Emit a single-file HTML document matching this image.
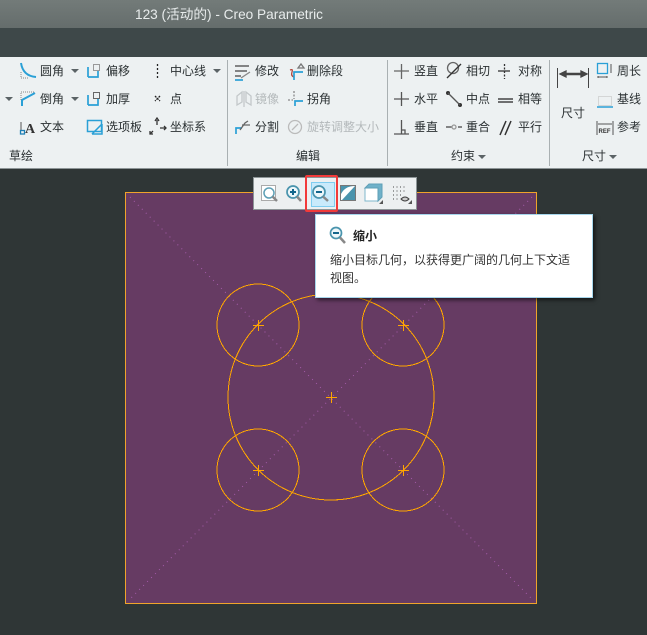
<!DOCTYPE html>
<html><head><meta charset="utf-8">
<style>
html,body{margin:0;padding:0}
body{width:647px;height:635px;overflow:hidden;position:relative;background:#2f3636;font-family:"Liberation Sans","Noto Sans CJK SC",sans-serif;}
.t{position:absolute;font-size:12px;line-height:16px;color:#2b3133;white-space:nowrap;font-family:"Noto Sans CJK SC","Liberation Sans",sans-serif}
.g{color:#b4b9bb}
.s{position:absolute;width:1px;top:60px;height:106px;background:#a9b0b2}
.a{position:absolute;width:0;height:0;border-left:4px solid transparent;border-right:4px solid transparent;border-top:4px solid #5b6366}
.c{position:absolute;background:#ffa500}
svg{position:absolute;overflow:visible}
</style></head><body>
<div style="position:absolute;left:0;top:0;width:647px;height:28px;background:linear-gradient(#737b79,#656d6c)"></div>
<div style="position:absolute;left:135px;top:6px;font-size:13.65px;line-height:17px;color:#e8ecec;white-space:nowrap">123 (活动的) - Creo Parametric</div>
<div style="position:absolute;left:0;top:28px;width:647px;height:29px;background:#3e4849"></div>
<div style="position:absolute;left:0;top:57px;width:647px;height:111px;background:#edf1f2"></div>
<div style="position:absolute;left:0;top:168px;width:647px;height:1px;background:#8d9597"></div>
<div class="s" style="left:227px"></div><div class="s" style="left:387px"></div><div class="s" style="left:549px"></div>

<div class="t" style="left:40px;top:63px">圆角</div><div class="t" style="left:106px;top:63px">偏移</div><div class="t" style="left:170px;top:63px">中心线</div>
<div class="t" style="left:40px;top:91px">倒角</div><div class="t" style="left:106px;top:91px">加厚</div><div class="t" style="left:170px;top:91px">点</div>
<div class="t" style="left:40px;top:119px">文本</div><div class="t" style="left:106px;top:119px">选项板</div><div class="t" style="left:170px;top:119px">坐标系</div>
<div class="t" style="left:9px;top:148px">草绘</div>
<div class="t" style="left:255px;top:63px">修改</div><div class="t" style="left:307px;top:63px">删除段</div>
<div class="t g" style="left:255px;top:91px">镜像</div><div class="t" style="left:307px;top:91px">拐角</div>
<div class="t" style="left:255px;top:119px">分割</div><div class="t g" style="left:307px;top:119px">旋转调整大小</div>
<div class="t" style="left:296px;top:148px">编辑</div>
<div class="t" style="left:414px;top:63px">竖直</div><div class="t" style="left:414px;top:91px">水平</div><div class="t" style="left:414px;top:119px">垂直</div>
<div class="t" style="left:466px;top:63px">相切</div><div class="t" style="left:466px;top:91px">中点</div><div class="t" style="left:466px;top:119px">重合</div>
<div class="t" style="left:518px;top:63px">对称</div><div class="t" style="left:518px;top:91px">相等</div><div class="t" style="left:518px;top:119px">平行</div>
<div class="t" style="left:451px;top:148px">约束</div>
<div class="t" style="left:561px;top:105px">尺寸</div>
<div class="t" style="left:617px;top:63px">周长</div><div class="t" style="left:617px;top:91px">基线</div><div class="t" style="left:617px;top:119px">参考</div>
<div class="t" style="left:582px;top:148px">尺寸</div>

<div class="a" style="left:71px;top:69px"></div><div class="a" style="left:213px;top:69px"></div>
<div class="a" style="left:5px;top:97px"></div><div class="a" style="left:71px;top:97px"></div>
<div class="a" style="left:478px;top:155px"></div><div class="a" style="left:609px;top:155px"></div>

<svg width="647" height="170" style="left:0;top:0" fill="none" stroke-width="1.300">
<path d="M21 63Q23 76 36 77" stroke="#2aa0d6" stroke-width="2"/><path d="M21 72V78H28" stroke="#888" stroke-width="1" stroke-dasharray="1 1"/>
<path d="M22 106V100L35 93" stroke="#2aa0d6" stroke-width="2"/><path d="M21 100V92H35" stroke="#888" stroke-width="1" stroke-dasharray="1 1"/>
<text x="25" y="133" font-family="Liberation Serif" font-weight="bold" font-size="14" fill="#333">A</text><path d="M21 122V130" stroke="#555" stroke-width="1"/><rect x="20.500" y="130.500" width="4" height="3.500" stroke="#1d7fb5"/>
<path d="M88 77V67M88 77H98V71" stroke="#2aa0d6" stroke-width="1.700"/><rect x="93.500" y="64.500" width="6" height="6" stroke="#999" stroke-width="1"/>
<path d="M88 105V95M88 105H98V99" stroke="#2aa0d6" stroke-width="1.700"/><rect x="93.500" y="92.500" width="6" height="6" stroke="#666" stroke-width="1"/>
<rect x="87.500" y="120.500" width="14" height="11" stroke="#2aa0d6" stroke-width="1.500"/><path d="M92 134H102V124M92 134L102 124" stroke="#2aa0d6" stroke-width="1.500"/>
<path d="M157.500 64V79" stroke="#222" stroke-dasharray="2 2"/>
<path d="M155 96L160 101M160 96L155 101" stroke="#222" stroke-dasharray="2 1"/>
<path d="M157 120V125M153 131L150 134M160 128H165" stroke="#333"/><path d="M155 121L157 118L159 121M150 131V134H153M164 126L166 128L164 130" stroke="#333"/>
<path d="M235 66H249M235 71H247M235 76H241" stroke="#444"/><path d="M235 80H243" stroke="#2aa0d6" stroke-width="1.700"/><path d="M241 78L250 72" stroke="#888"/>
<path d="M294 77C288 75 296 68 290 70" stroke="#b0463c"/><path d="M294 80V72H303" stroke="#2aa0d6" stroke-width="1.700"/><path d="M298 68L301 64L304 68Z" stroke="#777"/>
<path d="M242 92L237 96V105L242 102ZM246 92L251 96V105L246 102Z" stroke="#c3c8ca"/><path d="M244 91V107" stroke="#c3c8ca"/>
<path d="M288 100H293M294 91V99" stroke="#888" stroke-dasharray="2 1.500"/><path d="M295 106V101H303" stroke="#2aa0d6" stroke-width="1.700"/>
<path d="M236 134V128H242" stroke="#2aa0d6" stroke-width="1.700"/><path d="M242 125H250M240 130L245 123L248 121" stroke="#666"/>
<circle cx="295" cy="127" r="6.500" stroke="#bbb"/><path d="M292 130L298 124" stroke="#bbb"/>
<path d="M394 71H409M401.500 64V79" stroke="#666"/><path d="M394 99H409M401.500 92V106" stroke="#555"/>
<path d="M394 134H409M401.500 120V134M401.500 130H405V134" stroke="#555"/>
<circle cx="453" cy="68" r="5.500" stroke="#666"/><path d="M447 78L461 64" stroke="#333"/>
<circle cx="448" cy="93" r="2" fill="#333"/><circle cx="460" cy="105" r="2" fill="#333"/><path d="M448 93L460 105" stroke="#555"/>
<path d="M446 127H452M458 127H462" stroke="#444"/><circle cx="454" cy="127" r="2" stroke="#999"/>
<path d="M504.500 64V79" stroke="#333" stroke-dasharray="2 1.500"/><path d="M498 71H510" stroke="#333"/>
<path d="M498 99H513M498 102H513" stroke="#444" stroke-width="1.400"/>
<path d="M500 135L506 121M505 135L511 121" stroke="#333" stroke-width="1.500"/>
<path d="M557.500 68V88M588.500 68V88" stroke="#444" stroke-width="1"/><path d="M562 74H584" stroke="#444" stroke-width="2.500"/><path d="M560 74L566 71V77ZM587 74L581 71V77Z" fill="#444" stroke="#444"/>
<rect x="597.500" y="63.500" width="10" height="10" stroke="#2aa0d6"/><path d="M611 64V73M598 76V78M607 76V78M598 77H607" stroke="#555" stroke-width="1"/>
<rect x="598.500" y="96.500" width="13" height="9" stroke="#bbb" stroke-width="1" stroke-dasharray="1 1"/><path d="M597 107H613" stroke="#2aa0d6" stroke-width="1.500"/>
<path d="M597 121V135M613 121V135M598 124H612" stroke="#555" stroke-width="1"/><text x="598.500" y="133" font-size="6" font-weight="bold" font-family="Liberation Sans" fill="#333">REF</text>
</svg>

<svg width="647" height="635" style="left:0;top:0" fill="none">
<rect x="125.500" y="192.500" width="411" height="411" fill="#663b63" stroke="#f0a42a"/>
<path d="M130 197L532 599M532 197L130 599" stroke="#a65cab" stroke-dasharray="1 4.600"/>
<g stroke="#ffa500" shape-rendering="crispEdges">
<circle cx="331" cy="397" r="103"/>
<circle cx="258" cy="325" r="41"/><circle cx="403" cy="325" r="41"/><circle cx="258" cy="470" r="41"/><circle cx="403" cy="470" r="41"/>
</g>
</svg>
<div class="c" style="left:326px;top:397px;width:11px;height:1px"></div><div class="c" style="left:331px;top:392px;width:1px;height:11px"></div>
<div class="c" style="left:253px;top:325px;width:11px;height:1px"></div><div class="c" style="left:258px;top:320px;width:1px;height:11px"></div>
<div class="c" style="left:398px;top:325px;width:11px;height:1px"></div><div class="c" style="left:403px;top:320px;width:1px;height:11px"></div>
<div class="c" style="left:253px;top:470px;width:11px;height:1px"></div><div class="c" style="left:258px;top:465px;width:1px;height:11px"></div>
<div class="c" style="left:398px;top:470px;width:11px;height:1px"></div><div class="c" style="left:403px;top:465px;width:1px;height:11px"></div>

<div style="position:absolute;left:253px;top:177px;width:162px;height:31px;background:#edf0f1;border:1px solid #8d9597"></div>
<div style="position:absolute;left:311px;top:182px;width:22px;height:23px;background:#c9eafb;border:1px solid #7fcdf0"></div>
<div style="position:absolute;left:305px;top:175px;width:29px;height:33px;border:2px solid #f23a3a;border-radius:2px"></div>
<svg width="647" height="635" style="left:0;top:0" fill="none">
<rect x="261.500" y="185.500" width="14" height="15" fill="#fff" stroke="#aaa"/>
<circle cx="269" cy="193" r="5" stroke="#5d9fb5" stroke-width="1.500"/><path d="M272.500 196.500L277 201" stroke="#888" stroke-width="2.500"/>
<circle cx="293" cy="192" r="6" fill="#eef7fa" stroke="#4a94ad" stroke-width="1.700"/><path d="M290 192H296M293 189V195" stroke="#14668c" stroke-width="2"/><path d="M297 196.500L301 201" stroke="#888" stroke-width="2.500"/>
<circle cx="319" cy="192" r="6" fill="#eef7fa" stroke="#4a94ad" stroke-width="1.700"/><path d="M316 192H322" stroke="#14668c" stroke-width="2"/><path d="M323 196.500L328 201" stroke="#888" stroke-width="2.500"/>
<rect x="340.500" y="185.500" width="15" height="15" fill="#4a94ad" stroke="#777"/><path d="M341 200V194Q345 186 355 186L342 200Z" fill="#fff"/>
<path d="M365 188H378V201H365Z" fill="#fff" stroke="#7fb7cc"/><path d="M365 188L369 184H382V197L378 201V188Z" fill="#6fb1c9" stroke="#5f9fb6"/>
<path d="M393 187h1M396.500 187h1M400 187h1M403.500 187h1M393 191h1M396.500 191h1M400 191h1M403.500 191h1M393 195h1M396.500 195h1M400 195h1M393 199h1M396.500 199h1" stroke="#444"/>
<path d="M401 199Q405 195 409 199Q405 203 401 199Z" stroke="#444" fill="#ccc"/>
<path d="M383 204L379 204L383 200Z M412 204L408 204L412 200Z" fill="#555"/>
</svg>

<div style="position:absolute;left:315px;top:214px;width:276px;height:82px;background:#fff;border:1px solid #a6d6ec;box-shadow:2px 2px 4px rgba(0,0,0,.6)"></div>
<svg width="647" height="635" style="left:0;top:0" fill="none">
<circle cx="336" cy="233" r="5.500" fill="#eef7fa" stroke="#4a94ad" stroke-width="1.700"/><path d="M333 233H339" stroke="#14668c" stroke-width="2"/><path d="M340 237.500L345 243" stroke="#888" stroke-width="2.500"/>
</svg>
<div class="t" style="left:353px;top:228px;font-weight:bold;color:#222">缩小</div>
<div class="t" style="left:330px;top:252px;color:#333">缩小目标几何，以获得更广阔的几何上下文适</div>
<div class="t" style="left:330px;top:270px;color:#333">视图。</div>
</body></html>
